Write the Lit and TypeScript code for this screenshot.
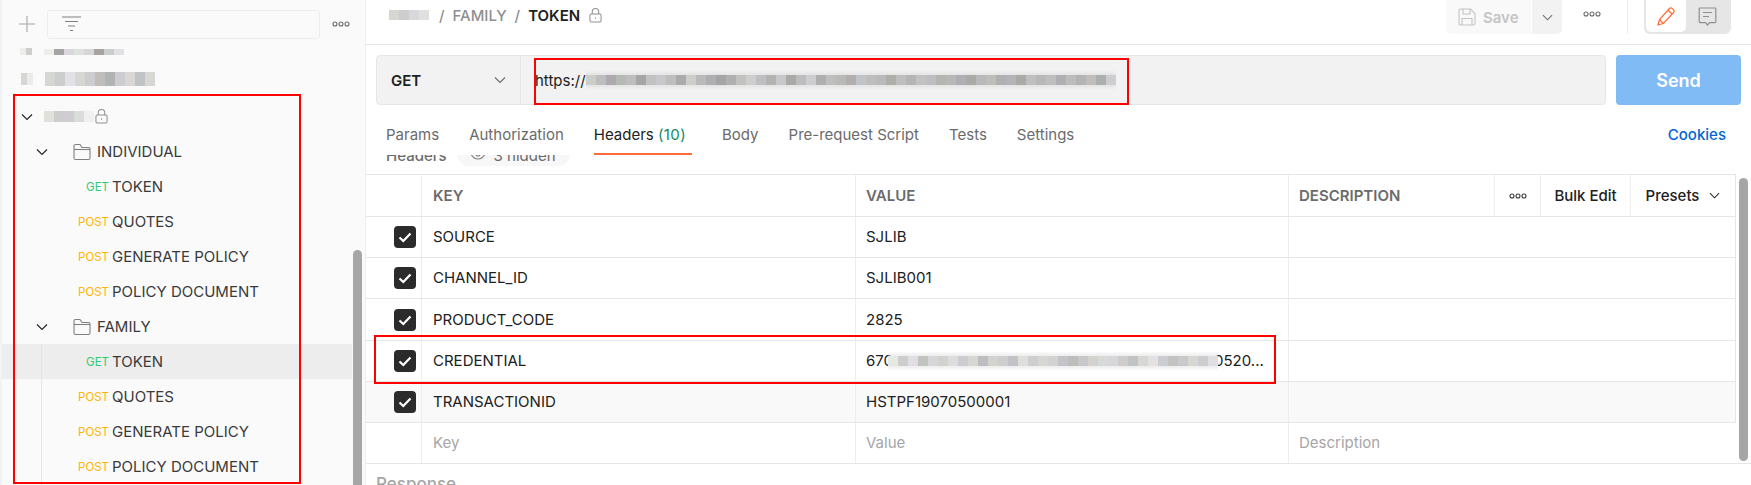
import { LitElement, html, css } from "lit";
import { customElement } from "lit/decorators.js";

const chevron = () => html`<svg class="chev" viewBox="0 0 12 12" fill="none" stroke="currentColor" stroke-width="1.1"><path d="M1 3.5 6 8.500 11 3.500"/></svg>`;
const dots = (cls = "dots") => html`<svg class=${cls} viewBox="0 0 18 6" fill="none" stroke="currentColor" stroke-width="1.1"><circle cx="3" cy="3" r="2"/><circle cx="9" cy="3" r="2"/><circle cx="15" cy="3" r="2"/></svg>`;
const lock = html`<svg class="lock" viewBox="0 0 14 16" fill="none" stroke="currentColor" stroke-width="1.1"><rect x="1" y="6.500" width="12" height="8.500" rx="1.500"/><path d="M3.500 6.500V4a3.500 3.500 0 0 1 7 0v2.500"/><path d="M7 10v1.500"/></svg>`;
const folder = html`<svg class="folder" viewBox="0 0 18 18" fill="none" stroke="currentColor" stroke-width="1.1"><path d="M1 3a1.500 1.500 0 0 1 1.500-1.500H7L9 4.500h6.500A1.500 1.500 0 0 1 17 6v9a1.500 1.500 0 0 1-1.500 1.500h-13A1.500 1.500 0 0 1 1 15Z"/><path d="M1 6.500h16"/></svg>`;

const blurRow = (vals: number[], h = 6, w = 10, soft = false) => html`<span class="blur ${soft ? "soft" : ""}">${vals.map((v, i) => html`<i style="background:rgb(${v + (i % 3 - 1) * 2},${v},${v + ((i * 2) % 5 - 2) * 2});height:${h}px;width:${w}px"></i>`)}</span>`;

@customElement("app-root")
export class AppRoot extends LitElement {
  static styles = css`
    :host { display: block; position: relative; width: 1751px; height: 485px; overflow: hidden; background: #fff;
      font-family: Inter, "Liberation Sans", sans-serif; font-size: 15px; color: #212121; }
    * { box-sizing: border-box; }
    .app { display: flex; height: 485px; }
    svg { display: block; flex: none; }
    .blur { display: inline-flex; align-items: center; flex: none; }
    .blur i { display: block; flex: none; }
    .soft { padding: 5px 0; margin: -5px 0; background: linear-gradient(rgba(205,205,205,0), rgba(205,205,205,.45) 30%, rgba(205,205,205,.45) 70%, rgba(205,205,205,0)); }

    .side { width: 366px; flex: none; background: #fafafa; border-left: 2px solid #f3f3f3; border-right: 1px solid #ededed; position: relative; overflow: hidden; }
    .side-top { display: flex; align-items: center; height: 48px; padding: 0 0 0 17px; }
    .plus { width: 16px; height: 16px; color: #a6a6a6; margin-right: 12px; }
    .filter { width: 273px; height: 29px; border: 1px solid #ededed; border-radius: 3px; display: flex; align-items: center; padding-left: 14px; background: #fafafa; }
    .filter svg { width: 19px; height: 16px; color: #808080; }
    .side-top .dots { margin-left: 12px; color: #6b6b6b; width: 18px; height: 6px; }
    .ws { display: flex; align-items: center; }
    .ws1 { height: 9px; margin-top: -1px; padding-left: 18px; gap: 12px; }
    .ws2 { height: 18px; margin-top: 14px; padding-left: 19px; gap: 12px; }

    .tree { position: relative; margin-top: 11px; padding-right: 13px; }
    .row { display: flex; align-items: center; height: 35px; color: #3b3b3b; white-space: nowrap; font-size: 15px; }
    .row .chev { width: 12px; height: 12px; color: #212121; }
    .coll { padding-left: 19px; }
    .coll .blur { margin-left: 11px; }
    .coll .lock { width: 13px; height: 15px; color: #8f8f8f; margin-left: 1px; }
    .fold { padding-left: 34px; }
    .fold .folder { width: 18px; height: 18px; color: #808080; margin-left: 25px; margin-right: 6px; }
    .req.sel { background: #ededed; }
    .m { width: 110px; text-align: right; padding-right: 3px; font-size: 11.5px; flex: none; }
    .get { color: #2ecc71; }
    .post { color: #ffb400; }
    .guide { position: absolute; left: 39px; top: 344px; bottom: 0; width: 1px; background: #e6e6e6; }
    .sb { position: absolute; left: 351px; top: 250px; width: 9px; height: 240px; background: #a6a6a6; border-radius: 5px 5px 0 0; }

    .main { flex: 1; min-width: 0; display: flex; flex-direction: column; position: relative; }
    .head { height: 45px; border-bottom: 1px solid #e6e6e6; display: flex; padding-left: 23px; flex: none; }
    .crumb { display: flex; align-items: center; height: 30px; gap: 8px; font-weight: 500; color: #8f8f8f; font-size: 15px; }
    .crumb .blur { margin-right: 2px; }
    .crumb b { font-weight: 600; color: #212121; }
    .crumb .lock { width: 13px; height: 15px; color: #8f8f8f; margin-left: 1px; }
    .actions { margin-left: auto; display: flex; height: 34px; align-items: flex-start; padding-right: 20px; }
    .save { width: 85px; height: 34px; background: #f9f9f9; border-radius: 0 0 0 5px; display: flex; align-items: center; gap: 7px; padding-left: 12px; color: #c4c4c4; font-weight: 600; }
    .save svg { width: 18px; height: 18px; }
    .savec { width: 30px; margin-left: 1px; height: 34px; background: #f2f2f2; border-radius: 0 0 5px 0; display: flex; align-items: center; justify-content: center; color: #6b6b6b; }
    .savec svg { width: 11px; height: 11px; }
    .adots { width: 18px; height: 6px; margin: 11px 26px 0 21px; color: #6b6b6b; }
    .vline { width: 1px; height: 34px; background: #ededed; margin-right: 16px; }
    .toggle { width: 87px; height: 34px; background: #e6e6e6; border-radius: 0 0 6px 6px; display: flex; padding: 0 0 2px 2px; }
    .toggle span { width: 40px; display: flex; align-items: center; justify-content: center; }
    .toggle .on { background: #fff; border-radius: 0 0 5px 5px; color: #ff6c37; }
    .toggle .off { color: #8f8f8f; width: 42px; }
    .toggle svg { width: 19px; height: 19px; }

    .url { display: flex; gap: 10px; margin: 10px 10px 0; height: 50px; flex: none; }
    .ubox { flex: 1; display: flex; background: #f2f2f2; border: 1px solid #e6e6e6; border-radius: 4px; min-width: 0; }
    .method { width: 144px; flex: none; border-right: 1px solid #e6e6e6; display: flex; align-items: center; padding: 0 14px; font-weight: 600; }
    .method svg { margin-left: auto; width: 12px; height: 12px; color: #6b6b6b; }
    .addr { display: flex; align-items: center; padding-left: 14px; color: #212121; }
    .send { width: 125px; flex: none; background: #80bbf5; border-radius: 4px; color: #fff; font-weight: 600; font-size: 18px; display: flex; align-items: center; justify-content: center; }

    .tabs { display: flex; height: 50px; padding: 8px 25px 0 20px; flex: none; color: #6b6b6b; gap: 30px; }
    .tab { height: 42px; display: flex; align-items: center; white-space: pre; position: relative; }
    .tab.on { color: #212121; padding-right: 6px; }
    .tab.on::after { content: ""; position: absolute; left: 0; right: 0; bottom: 0; height: 2px; background: #ff6c37; }
    .tab em { font-style: normal; color: #0f8a5f; letter-spacing: .4px; }
    .cookies { margin-left: auto; color: #0265d2; font-weight: 500; height: 42px; display: flex; align-items: center; }

    .peek { height: 19px; flex: none; overflow: hidden; display: flex; gap: 10px; padding-left: 20px; color: #6b6b6b; font-weight: 500; }
    .peek span { margin-top: -8px; display: block; line-height: 17px; }
    .pill { background: #f7f7f7; border-radius: 12px; height: 24px; margin-top: -13px; padding: 5px 14px 0 13px; display: flex; gap: 8px; font-weight: 400; }
    .pill span { margin-top: 0; }
    .pill svg { width: 16px; height: 12px; margin-top: 1px; color: #808080; }

    .table { width: 1370px; border-top: 1px solid #e6e6e6; flex: none; }
    .tr { display: grid; grid-template-columns: 55px 434px 433px 1fr; height: 41px; border-bottom: 1px solid #e6e6e6; border-right: 1px solid #e6e6e6; }
    .tr.tall { height: 42px; }
    .tr.last { height: 40px; border-bottom: none; border-right: none; }
    .tr.hov { background: #f9f9f9; }
    .td { display: flex; align-items: center; padding: 0 10px 1px; border-left: 1px solid #ededed; min-width: 0; white-space: nowrap; overflow: hidden; color: #212121; }
    .td:first-child { border-left: none; padding: 0 0 0 28px; }
    .td.k { padding-left: 11px; }
    .th { color: #6b6b6b; font-weight: 600; padding-bottom: 0; }
    .ph { color: #a6a6a6; }
    .desc { padding: 0; display: flex; }
    .desc .lbl { width: 205px; padding-left: 10px; display: flex; align-items: center; }
    .desc .cell { border-left: 1px solid #ededed; display: flex; align-items: center; justify-content: center; color: #212121; font-weight: 500; height: 100%; }
    .desc .c1 { width: 46px; }
    .desc .c1 svg { width: 18px; height: 6px; color: #3b3b3b; }
    .desc .c2 { width: 90px; }
    .desc .c3 { flex: 1; gap: 10px; }
    .desc .c3 svg { width: 11px; height: 11px; }
    .check { width: 22px; height: 22px; background: #2b2b2b; border-radius: 4px; display: flex; align-items: center; justify-content: center; }
    .check svg { width: 16px; height: 16px; }
    .val { display: flex; align-items: center; }
    .val .blur { margin: -5px -4px -5px -5px; position: relative; }
    .response { flex: 1; border-top: 1px solid #e6e6e6; display: flex; padding: 10px 15px 0 10px; color: #a6a6a6; font-weight: 500; font-size: 17px; }
    .response svg { margin-left: auto; width: 11px; height: 11px; margin-top: 8px; color: #8f8f8f; }
    .sb2 { position: absolute; left: 1373px; top: 178px; width: 9px; height: 283px; background: #a6a6a6; border-radius: 5px; }

    .mark { position: absolute; border: 2px solid #f00; pointer-events: none; }
    .m1 { left: 13px; top: 94px; width: 288px; height: 390px; }
    .m2 { left: 534px; top: 58px; width: 595px; height: 47px; }
    .m3 { left: 374px; top: 335px; width: 902px; height: 49px; }
  `;

  private req(kind: string, name: string, sel = false) {
    return html`<div class="row req ${sel ? "sel" : ""}"><span class="m ${kind.toLowerCase()}">${kind}</span><span>${name}</span></div>`;
  }

  private hrow(k: string, v: unknown, cls = "") {
    return html`<div class="tr ${cls}">
      <div class="td"><span class="check"><svg viewBox="0 0 16 16" fill="none" stroke="#fff" stroke-width="2.2"><path d="M2.500 8.500 6.300 12 13.500 4.500"/></svg></span></div>
      <div class="td k">${k}</div><div class="td val">${v}</div><div class="td"></div></div>`;
  }

  render() {
    const cred = [232,205,222,195,215,210,222,205,215,190,210,205,195,222,205,215,210,195,190,200,210,218,215,205,195,215,225,205,195,200,215,205,222];
    const u = [205,190,170,185,190,165,195,200,190,170,205,185,175,165,175,195,205,190,180,200,170,190,205,175,190,185,175,195,190,185,175,190,180,195,190,180,185,175,170,185,190,175,180,170,190,185,190,175,190,180,190,175,205];
    return html`<div class="app">
      <aside class="side">
        <div class="side-top">
          <svg class="plus" viewBox="0 0 16 16" stroke="currentColor" stroke-width="1.1"><path d="M8 0v16M0 8h16"/></svg>
          <div class="filter"><svg viewBox="0 0 19 16" stroke="currentColor" stroke-width="1.2"><path d="M0 1h19M3 5.500h13M6 10h7M8 14.500h3"/></svg></div>
          ${dots()}
        </div>
        <div class="ws ws1">${blurRow([238,205], 7, 6)}${blurRow([238,165,215,225,215,165,205,225],6)}</div>
        <div class="ws ws2">${blurRow([215,235],12,6)}${blurRow([215,205,225,215,205,190,180,205,215,195,215],14)}</div>
        <div class="tree">
          <div class="row coll">${chevron()}${blurRow([225,205,205,220,240],11)}${lock}</div>
          <div class="row fold">${chevron()}${folder}<span>INDIVIDUAL</span></div>
          ${this.req("GET","TOKEN")}${this.req("POST","QUOTES")}${this.req("POST","GENERATE POLICY")}${this.req("POST","POLICY DOCUMENT")}
          <div class="row fold">${chevron()}${folder}<span>FAMILY</span></div>
          ${this.req("GET","TOKEN",true)}${this.req("POST","QUOTES")}${this.req("POST","GENERATE POLICY")}${this.req("POST","POLICY DOCUMENT")}
        </div>
        <div class="guide"></div>
        <div class="sb"></div>
      </aside>
      <main class="main">
        <div class="head">
          <div class="crumb">${blurRow([215,205,215,225],10)}<span>/</span><span>FAMILY</span><span>/</span><b>TOKEN</b>${lock}</div>
          <div class="actions">
            <div class="save"><svg viewBox="0 0 18 18" fill="none" stroke="currentColor" stroke-width="1.1"><path d="M1 2.500A1.500 1.500 0 0 1 2.500 1h10L17 5.500V15.500A1.500 1.500 0 0 1 15.500 17h-13A1.500 1.500 0 0 1 1 15.500Z"/><path d="M5 1v5h7V1M4 17v-6.500h10V17"/></svg>Save</div>
            <div class="savec">${chevron()}</div>
            ${dots("adots")}
            <div class="vline"></div>
            <div class="toggle">
              <span class="on"><svg viewBox="0 0 19 19" fill="none" stroke="currentColor" stroke-width="1.2"><path d="M1 18 2.500 12.500 12.500 1.500a1.800 1.800 0 0 1 2.600 0l1.500 1.400a1.800 1.800 0 0 1 0 2.600L6.300 16.500Z"/><path d="M2.500 12.500 6.300 16.500M11 3.200 15 7"/></svg></span>
              <span class="off"><svg viewBox="0 0 19 19" fill="none" stroke="currentColor" stroke-width="1.2"><path d="M2 1h15a.8.8 0 0 1 .8.8v13a.8.8 0 0 1-.8.800h-5.500L9.500 18 7.500 15.600H2a.8.8 0 0 1-.8-.8v-13A.8.8 0 0 1 2 1Z"/><path d="M5 5.500h9M5 9.500h6"/></svg></span>
            </div>
          </div>
        </div>
        <div class="url">
          <div class="ubox">
            <div class="method">GET${chevron()}</div>
            <div class="addr">https://${blurRow(u,10,10,true)}</div>
          </div>
          <div class="send">Send</div>
        </div>
        <div class="tabs">
          <div class="tab">Params</div><div class="tab">Authorization</div>
          <div class="tab on">Headers <em>(10)</em></div>
          <div class="tab">Body</div><div class="tab">Pre-request Script</div><div class="tab">Tests</div><div class="tab">Settings</div>
          <div class="cookies">Cookies</div>
        </div>
        <div class="peek"><span>Headers</span><div class="pill"><svg viewBox="0 0 16 12" fill="none" stroke="currentColor" stroke-width="1.1"><path d="M1 6s2.500-5 7-5 7 5 7 5-2.500 5-7 5-7-5-7-5Z"/><circle cx="8" cy="6" r="2"/></svg><span>3 hidden</span></div></div>
        <div class="table">
          <div class="tr tall">
            <div class="td th"></div><div class="td th k">KEY</div><div class="td th">VALUE</div>
            <div class="td th desc"><span class="lbl">DESCRIPTION</span><span class="cell c1">${dots()}</span><span class="cell c2">Bulk Edit</span><span class="cell c3">Presets ${chevron()}</span></div>
          </div>
          ${this.hrow("SOURCE","SJLIB")}
          ${this.hrow("CHANNEL_ID","SJLIB001")}
          ${this.hrow("PRODUCT_CODE","2825","tall")}
          ${this.hrow("CREDENTIAL",html`670${blurRow(cred,10,10,true)}0520...`)}
          ${this.hrow("TRANSACTIONID","HSTPF19070500001","hov")}
          <div class="tr last"><div class="td"></div><div class="td ph k">Key</div><div class="td ph">Value</div><div class="td ph">Description</div></div>
        </div>
        <div class="response"><span>Response</span>${chevron()}</div>
        <div class="sb2"></div>
      </main>
    </div>
    <div class="mark m1"></div><div class="mark m2"></div><div class="mark m3"></div>`;
  }
}
